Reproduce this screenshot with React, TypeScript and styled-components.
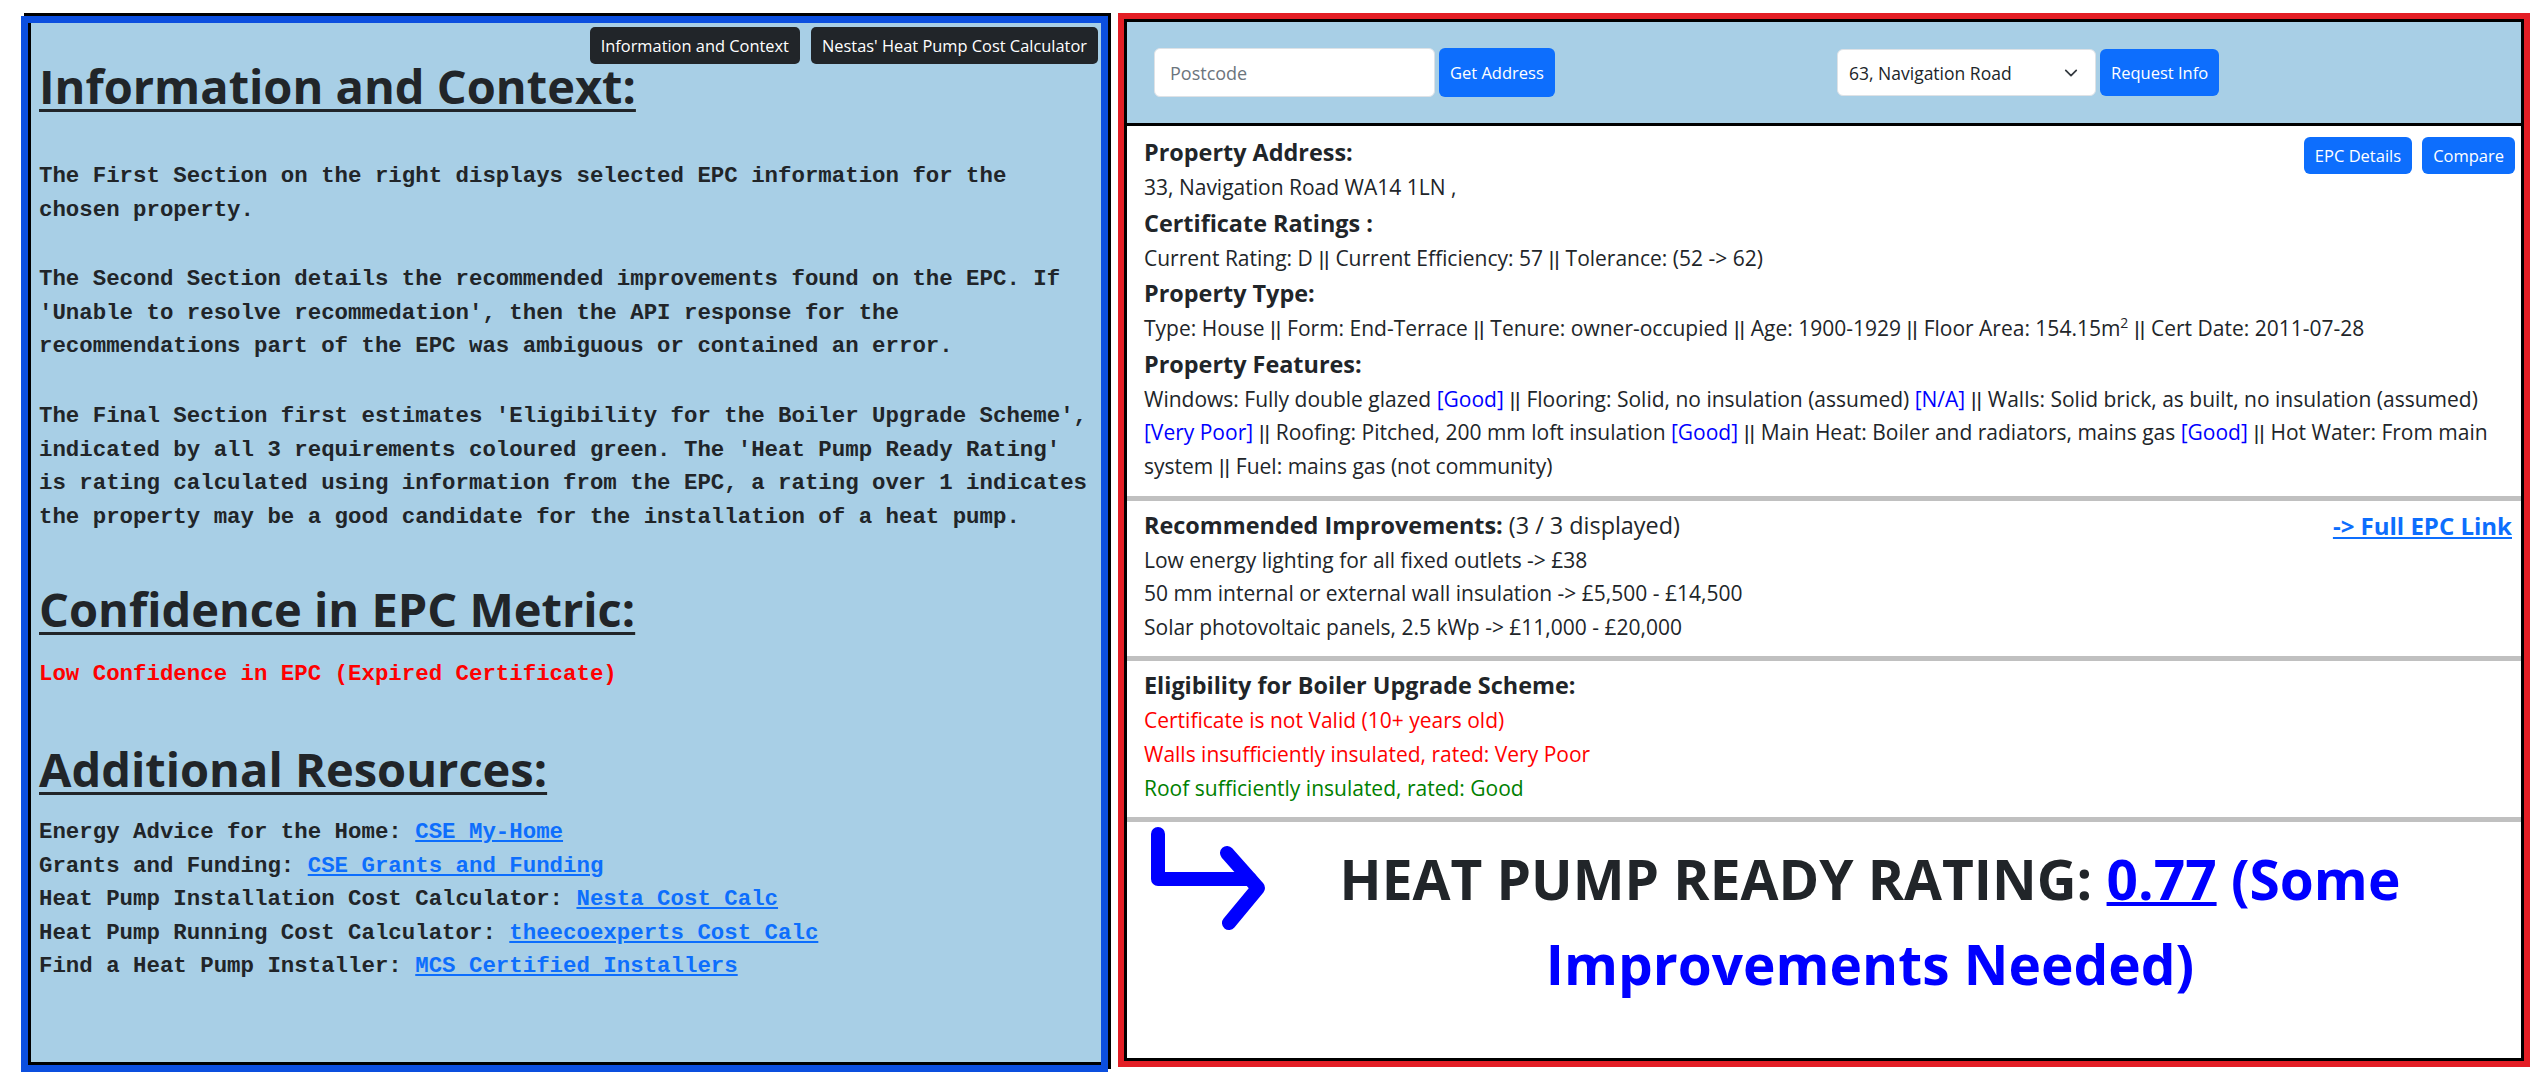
import React from "react";
import styled, { createGlobalStyle } from "styled-components";

const SANS = `"Open Sans", "Noto Sans", Arial, sans-serif`;
const MONO = `"Liberation Mono", "Courier New", monospace`;

const GlobalStyle = createGlobalStyle`
  *, *::before, *::after { box-sizing: border-box; }
  html, body { margin: 0; padding: 0; background: #ffffff; }
  body { font-family: ${SANS}; color: #212529; }
`;

const Page = styled.main`
  display: flex;
  align-items: flex-start;
  gap: 10px;
  width: 2542px;
  height: 1075px;
  padding: 13px 12px 0 21px;
  overflow: hidden;
`;

/* ---------- left: information panel ---------- */

const InfoPanel = styled.section`
  flex: 0 0 1087px;
  height: 1056px;
  margin-top: 3px;
  display: flex;
  flex-direction: column;
  padding: 0 3px 0 11px;
  background: #a8cfe6;
  border: 7px solid #0c4fdf;
  box-shadow: 3px -3px 0 #000, inset 3px -3px 0 #000;
`;

const TabBar = styled.nav`
  display: flex;
  justify-content: flex-end;
  gap: 11px;
  margin-top: 4px;
`;

const DarkButton = styled.button`
  height: 37px;
  padding: 0 11px;
  border: 0;
  border-radius: 5px;
  background: #212529;
  color: #ffffff;
  font-family: ${SANS};
  font-size: 16.4px;
  line-height: 37px;
  white-space: nowrap;
`;

const Heading = styled.h1<{ $top: number }>`
  align-self: flex-start;
  margin: ${(p) => p.$top}px 0 0;
  font-family: ${SANS};
  font-size: 47px;
  line-height: 56px;
  font-weight: 700;
  color: #212529;
  text-decoration: underline;
  text-decoration-thickness: 3px;
  text-underline-offset: 5px;
`;

const Note = styled.p<{ $top: number; $alert?: boolean }>`
  margin: ${(p) => p.$top}px 0 0;
  font-family: ${MONO};
  font-size: 22.4px;
  line-height: 33.6px;
  font-weight: 700;
  color: ${(p) => (p.$alert ? "#ff0000" : "#212529")};
`;

const ResourceList = styled.ul<{ $top: number }>`
  margin: ${(p) => p.$top}px 0 0;
  padding: 0;
  list-style: none;
  font-family: ${MONO};
  font-size: 22.4px;
  line-height: 33.6px;
  font-weight: 700;
  color: #212529;
`;

const ResourceLink = styled.a`
  color: #0d6efd;
  text-decoration: underline;
`;

/* ---------- right: tool panel ---------- */

const ToolPanel = styled.section`
  flex: 0 0 1412px;
  height: 1054px;
  display: flex;
  border: 6px solid #e31e25;
`;

const ToolFrame = styled.div`
  flex: 1;
  min-width: 0;
  display: flex;
  flex-direction: column;
  border: 3px solid #000;
  background: #ffffff;
`;

const SearchBar = styled.header`
  flex: 0 0 104px;
  display: grid;
  grid-template-columns: 1fr 1fr;
  column-gap: 26px;
  align-items: center;
  padding: 0 27px;
  background: #a8cfe6;
  border-bottom: 3px solid #000;
`;

const Field = styled.div`
  display: flex;
  gap: 4px;
`;

const PostcodeInput = styled.input`
  width: 281px;
  height: 49px;
  padding: 0 15px;
  border: 1px solid #dee2e6;
  border-radius: 6px;
  background: #ffffff;
  font-family: ${SANS};
  font-size: 18px;
  color: #212529;
  outline: none;
  &::placeholder {
    color: #6c757d;
  }
`;

const PrimaryButton = styled.button<{ $h: number }>`
  height: ${(p) => p.$h}px;
  padding: 0 11px;
  border: 0;
  border-radius: 6px;
  background: #0d6efd;
  color: #ffffff;
  font-family: ${SANS};
  font-size: 16.5px;
  white-space: nowrap;
`;

const AddressSelect = styled.div`
  width: 259px;
  height: 47px;
  display: flex;
  align-items: center;
  justify-content: space-between;
  padding: 0 17px 0 11px;
  border: 1px solid #dee2e6;
  border-radius: 6px;
  background: #ffffff;
  font-size: 17.5px;
  color: #212529;
`;

const Block = styled.div<{ $divider?: boolean }>`
  padding: ${(p) => (p.$divider ? 6 : 8)}px 6px 12px 17px;
  border-top: ${(p) => (p.$divider ? "5px solid #c0c0c0" : "0")};
`;

const BlockHead = styled.div`
  display: flex;
  justify-content: space-between;
  align-items: flex-start;
  height: 37px;
`;

const ButtonGroup = styled.div`
  display: flex;
  gap: 10px;
  margin-top: 3px;
`;

const Label = styled.h2`
  margin: 0;
  font-size: 23.4px;
  line-height: 37px;
  font-weight: 700;
  color: #212529;
`;

const Aside = styled.span`
  font-weight: 400;
`;

const FullLink = styled.a`
  margin-right: 3px;
  font-size: 24px;
  line-height: 37px;
  font-weight: 700;
  color: #0d6efd;
  text-decoration: underline;
`;

const Line = styled.p<{ $tone?: "bad" | "ok" }>`
  margin: 0;
  font-size: 21px;
  line-height: 33.6px;
  color: ${(p) => (p.$tone === "bad" ? "#ff0000" : p.$tone === "ok" ? "#008000" : "#212529")};
`;

const Sep = styled.span`
  font-family: "Liberation Sans", Arial, sans-serif;
  line-height: 1;
`;

const Grade = styled.span`
  color: #0000ff;
`;

const Sup = styled.sup`
  font-size: 14px;
  line-height: 0;
`;

const Verdict = styled.div`
  flex: 1;
  display: grid;
  grid-template-columns: 140px 1fr;
  align-items: start;
  padding: 5px 6px 0 19px;
  border-top: 5px solid #c0c0c0;
`;

const VerdictText = styled.p`
  margin: 9px 0 0;
  padding-right: 61px;
  text-align: center;
  font-size: 55px;
  line-height: 85px;
  font-weight: 700;
  color: #212529;
`;

const Score = styled.a`
  color: #0000ff;
  text-decoration: underline;
  text-decoration-thickness: 4px;
`;

const ScoreNote = styled.span`
  color: #0000ff;
`;

const Chevron = () => (
  <svg width="14" height="14" viewBox="0 0 16 16" fill="none">
    <path d="M2 5l6 6 6-6" stroke="#343a40" strokeWidth="2" strokeLinecap="round" strokeLinejoin="round" />
  </svg>
);

const TurnArrow = () => (
  <svg width="122" height="104" viewBox="0 0 122 104" fill="none">
    <path d="M12 7V52H104" stroke="#0000ff" strokeWidth="14" strokeLinecap="round" strokeLinejoin="round" />
    <path d="M81 26L112 61L83 96" stroke="#0000ff" strokeWidth="14" strokeLinecap="round" strokeLinejoin="round" />
  </svg>
);

const resources: [string, string][] = [
  ["Energy Advice for the Home: ", "CSE My-Home"],
  ["Grants and Funding: ", "CSE Grants and Funding"],
  ["Heat Pump Installation Cost Calculator: ", "Nesta Cost Calc"],
  ["Heat Pump Running Cost Calculator: ", "theecoexperts Cost Calc"],
  ["Find a Heat Pump Installer: ", "MCS Certified Installers"],
];

const Bar = () => <Sep> || </Sep>;

export default function App() {
  return (
    <>
      <GlobalStyle />
      <Page>
        <InfoPanel>
          <TabBar>
            <DarkButton>Information and Context</DarkButton>
            <DarkButton>Nestas' Heat Pump Cost Calculator</DarkButton>
          </TabBar>
          <Heading $top={-6}>Information and Context:</Heading>
          <Note $top={46}>
            The First Section on the right displays selected EPC information for the chosen property.
          </Note>
          <Note $top={36}>
            The Second Section details the recommended improvements found on the EPC. If 'Unable to resolve
            recommedation', then the API response for the recommendations part of the EPC was ambiguous or
            contained an error.
          </Note>
          <Note $top={36}>
            The Final Section first estimates 'Eligibility for the Boiler Upgrade Scheme', indicated by all 3
            requirements coloured green. The 'Heat Pump Ready Rating' is rating calculated using information from
            the EPC, a rating over 1 indicates the property may be a good candidate for the installation of a heat
            pump.
          </Note>
          <Heading $top={47}>Confidence in EPC Metric:</Heading>
          <Note $top={21} $alert>
            Low Confidence in EPC (Expired Certificate)
          </Note>
          <Heading $top={49}>Additional Resources:</Heading>
          <ResourceList $top={19}>
            {resources.map(([label, link]) => (
              <li key={link}>
                {label}
                <ResourceLink href="#">{link}</ResourceLink>
              </li>
            ))}
          </ResourceList>
        </InfoPanel>

        <ToolPanel>
          <ToolFrame>
            <SearchBar>
              <Field>
                <PostcodeInput placeholder="Postcode" />
                <PrimaryButton $h={49}>Get Address</PrimaryButton>
              </Field>
              <Field>
                <AddressSelect>
                  <span>63, Navigation Road</span>
                  <Chevron />
                </AddressSelect>
                <PrimaryButton $h={47}>Request Info</PrimaryButton>
              </Field>
            </SearchBar>

            <Block>
              <BlockHead>
                <Label>Property Address:</Label>
                <ButtonGroup>
                  <PrimaryButton $h={37}>EPC Details</PrimaryButton>
                  <PrimaryButton $h={37}>Compare</PrimaryButton>
                </ButtonGroup>
              </BlockHead>
              <Line>33, Navigation Road WA14 1LN ,</Line>
              <Label>Certificate Ratings :</Label>
              <Line>
                Current Rating: D<Bar />Current Efficiency: 57<Bar />Tolerance: (52 -&gt; 62)
              </Line>
              <Label>Property Type:</Label>
              <Line>
                Type: House<Bar />Form: End-Terrace<Bar />Tenure: owner-occupied<Bar />Age: 1900-1929<Bar />Floor
                Area: 154.15m<Sup>2</Sup>
                <Bar />
                Cert Date: 2011-07-28
              </Line>
              <Label>Property Features:</Label>
              <Line>
                Windows: Fully double glazed <Grade>[Good]</Grade>
                <Bar />
                Flooring: Solid, no insulation (assumed) <Grade>[N/A]</Grade>
                <Bar />
                Walls: Solid brick, as built, no insulation (assumed) <Grade>[Very Poor]</Grade>
                <Bar />
                Roofing: Pitched, 200 mm loft insulation <Grade>[Good]</Grade>
                <Bar />
                Main Heat: Boiler and radiators, mains gas <Grade>[Good]</Grade>
                <Bar />
                Hot Water: From main system
                <Bar />
                Fuel: mains gas (not community)
              </Line>
            </Block>

            <Block $divider>
              <BlockHead>
                <Label>
                  Recommended Improvements: <Aside>(3 / 3 displayed)</Aside>
                </Label>
                <FullLink href="#">-&gt; Full EPC Link</FullLink>
              </BlockHead>
              <Line>Low energy lighting for all fixed outlets -&gt; £38</Line>
              <Line>50 mm internal or external wall insulation -&gt; £5,500 - £14,500</Line>
              <Line>Solar photovoltaic panels, 2.5 kWp -&gt; £11,000 - £20,000</Line>
            </Block>

            <Block $divider>
              <Label>Eligibility for Boiler Upgrade Scheme:</Label>
              <Line $tone="bad">Certificate is not Valid (10+ years old)</Line>
              <Line $tone="bad">Walls insufficiently insulated, rated: Very Poor</Line>
              <Line $tone="ok">Roof sufficiently insulated, rated: Good</Line>
            </Block>

            <Verdict>
              <TurnArrow />
              <VerdictText>
                HEAT PUMP READY RATING: <Score href="#">0.77</Score>{" "}
                <ScoreNote>(Some Improvements Needed)</ScoreNote>
              </VerdictText>
            </Verdict>
          </ToolFrame>
        </ToolPanel>
      </Page>
    </>
  );
}
